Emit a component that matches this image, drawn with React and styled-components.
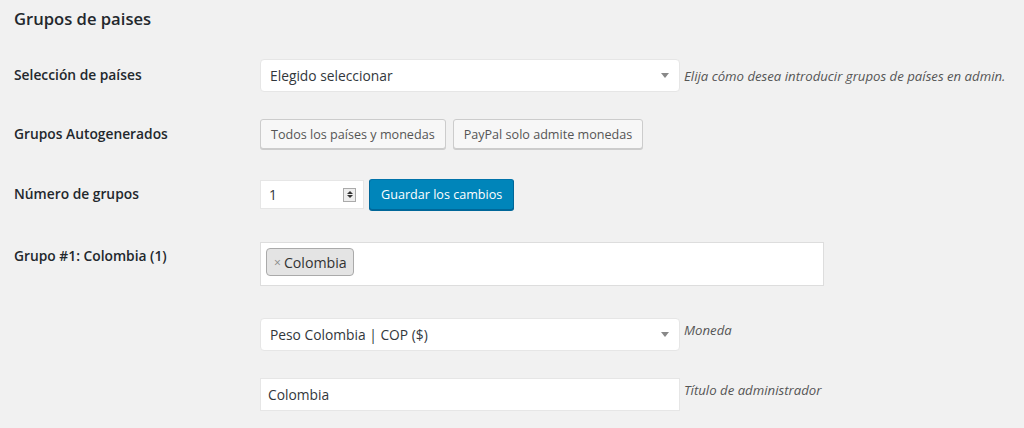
import React from 'react';
import styled, { createGlobalStyle } from 'styled-components';

const Global = createGlobalStyle`
  html, body {
    margin: 0;
    padding: 0;
    background: #f1f1f1;
  }
  body {
    font-family: "Open Sans", "Noto Sans", sans-serif;
    color: #23282d;
  }
`;

const Page = styled.div`
  padding: 4px 0 0 14px;
  width: 1010px;
`;

const Title = styled.h2`
  margin: 0;
  font-size: 16.6px;
  font-weight: 600;
  line-height: 30px;
  color: #23282d;
`;

const Table = styled.div`
  margin-top: 11px;
  display: flex;
  flex-direction: column;
`;

const Row = styled.div`
  display: grid;
  grid-template-columns: 246px 1fr;
  padding: ${p => p.$pad || '14px 0'};
`;

const Label = styled.div`
  font-size: 13.8px;
  font-weight: 600;
  line-height: 20px;
  color: #23282d;
  padding-top: ${p => p.$top || '6px'};
`;

const Cell = styled.div`
  display: flex;
  align-items: ${p => p.$align || 'center'};
  gap: ${p => p.$gap || '4px'};
`;

const SelectBox = styled.div`
  box-sizing: border-box;
  width: 420px;
  height: 33px;
  background: #fff;
  border: 1px solid #e6e6e6;
  border-radius: 4px;
  display: flex;
  align-items: center;
  justify-content: space-between;
  padding: 0 10px 0 9px;
  font-size: 13.8px;
  color: #32373c;
  flex-shrink: 0;
`;

const Caret = styled.span`
  width: 0;
  height: 0;
  border-left: 4px solid transparent;
  border-right: 4px solid transparent;
  border-top: 5px solid #888;
`;

const Desc = styled.span`
  font-size: 13.2px;
  font-style: italic;
  color: #555;
  white-space: nowrap;
  align-self: ${p => (p.$top ? 'flex-start' : 'center')};
  padding-top: ${p => (p.$top ? '3px' : '0')};
`;

const Button = styled.button`
  box-sizing: border-box;
  height: 30px;
  padding: 0 10px;
  font-family: inherit;
  font-size: 12.6px;
  color: #555;
  background: #f7f7f7;
  border: 1px solid #ccc;
  border-radius: 3px;
  box-shadow: 0 1px 0 #ccc;
  white-space: nowrap;
`;

const Primary = styled(Button)`
  height: 31px;
  padding: 0 11px;
  color: #fff;
  background: #0085ba;
  border-color: #0073aa #006799 #006799;
  box-shadow: 0 1px 0 #006799;
`;

const NumberWrap = styled.div`
  box-sizing: border-box;
  width: 104px;
  height: 29px;
  background: #fff;
  border: 1px solid #e6e6e6;
  display: flex;
  align-items: center;
  justify-content: space-between;
  padding: 0 7px 0 8px;
  font-size: 13.8px;
  color: #32373c;
`;

const Spinner = styled.span`
  box-sizing: border-box;
  width: 13px;
  height: 14px;
  border: 1px solid #aaa;
  background: #eee;
  display: flex;
  flex-direction: column;
  align-items: center;
  justify-content: center;
  gap: 1px;
  i {
    width: 0;
    height: 0;
    border-left: 3px solid transparent;
    border-right: 3px solid transparent;
  }
  i:first-child { border-bottom: 3px solid #333; }
  i:last-child { border-top: 3px solid #333; }
`;

const MultiBox = styled.div`
  box-sizing: border-box;
  width: 564px;
  height: 44px;
  background: #fff;
  border: 1px solid #ddd;
  padding: 5px 5px;
  display: flex;
  align-items: flex-start;
`;

const Tag = styled.span`
  box-sizing: border-box;
  height: 28px;
  display: inline-flex;
  align-items: center;
  gap: 3px;
  padding: 0 6px 0 7px;
  background: #e4e4e4;
  border: 1px solid #aaa;
  border-radius: 4px;
  font-size: 14.2px;
  color: #333;
  b {
    font-weight: 400;
    font-size: 12px;
    color: #888;
  }
`;

const TextBox = styled(SelectBox)`
  border-radius: 0;
  padding-left: 7px;
`;

export default function App() {
  return (
    <Page>
      <Global />
      <Title>Grupos de paises</Title>
      <Table>
        <Row $pad="14px 0 14px">
          <Label>Selección de países</Label>
          <Cell>
            <SelectBox>
              Elegido seleccionar
              <Caret />
            </SelectBox>
            <Desc>Elija cómo desea introducir grupos de países en admin.</Desc>
          </Cell>
        </Row>
        <Row $pad="13px 0 15px">
          <Label $top="5px">Grupos Autogenerados</Label>
          <Cell $gap="7px">
            <Button>Todos los países y monedas</Button>
            <Button>PayPal solo admite monedas</Button>
          </Cell>
        </Row>
        <Row $pad="15px 0 16px">
          <Label $top="5px">Número de grupos</Label>
          <Cell $gap="5px">
            <NumberWrap>
              1
              <Spinner>
                <i />
                <i />
              </Spinner>
            </NumberWrap>
            <Primary>Guardar los cambios</Primary>
          </Cell>
        </Row>
        <Row $pad="16px 0 16px">
          <Label $top="4px">Grupo #1: Colombia (1)</Label>
          <Cell $align="flex-start">
            <MultiBox>
              <Tag>
                <b>×</b>Colombia
              </Tag>
            </MultiBox>
          </Cell>
        </Row>
        <Row $pad="16px 0 13px">
          <Label />
          <Cell $align="flex-start">
            <SelectBox>
              Peso Colombia | COP ($)
              <Caret />
            </SelectBox>
            <Desc $top>Moneda</Desc>
          </Cell>
        </Row>
        <Row $pad="14px 0 14px">
          <Label />
          <Cell $align="flex-start">
            <TextBox>Colombia</TextBox>
            <Desc $top>Título de administrador</Desc>
          </Cell>
        </Row>
      </Table>
    </Page>
  );
}
